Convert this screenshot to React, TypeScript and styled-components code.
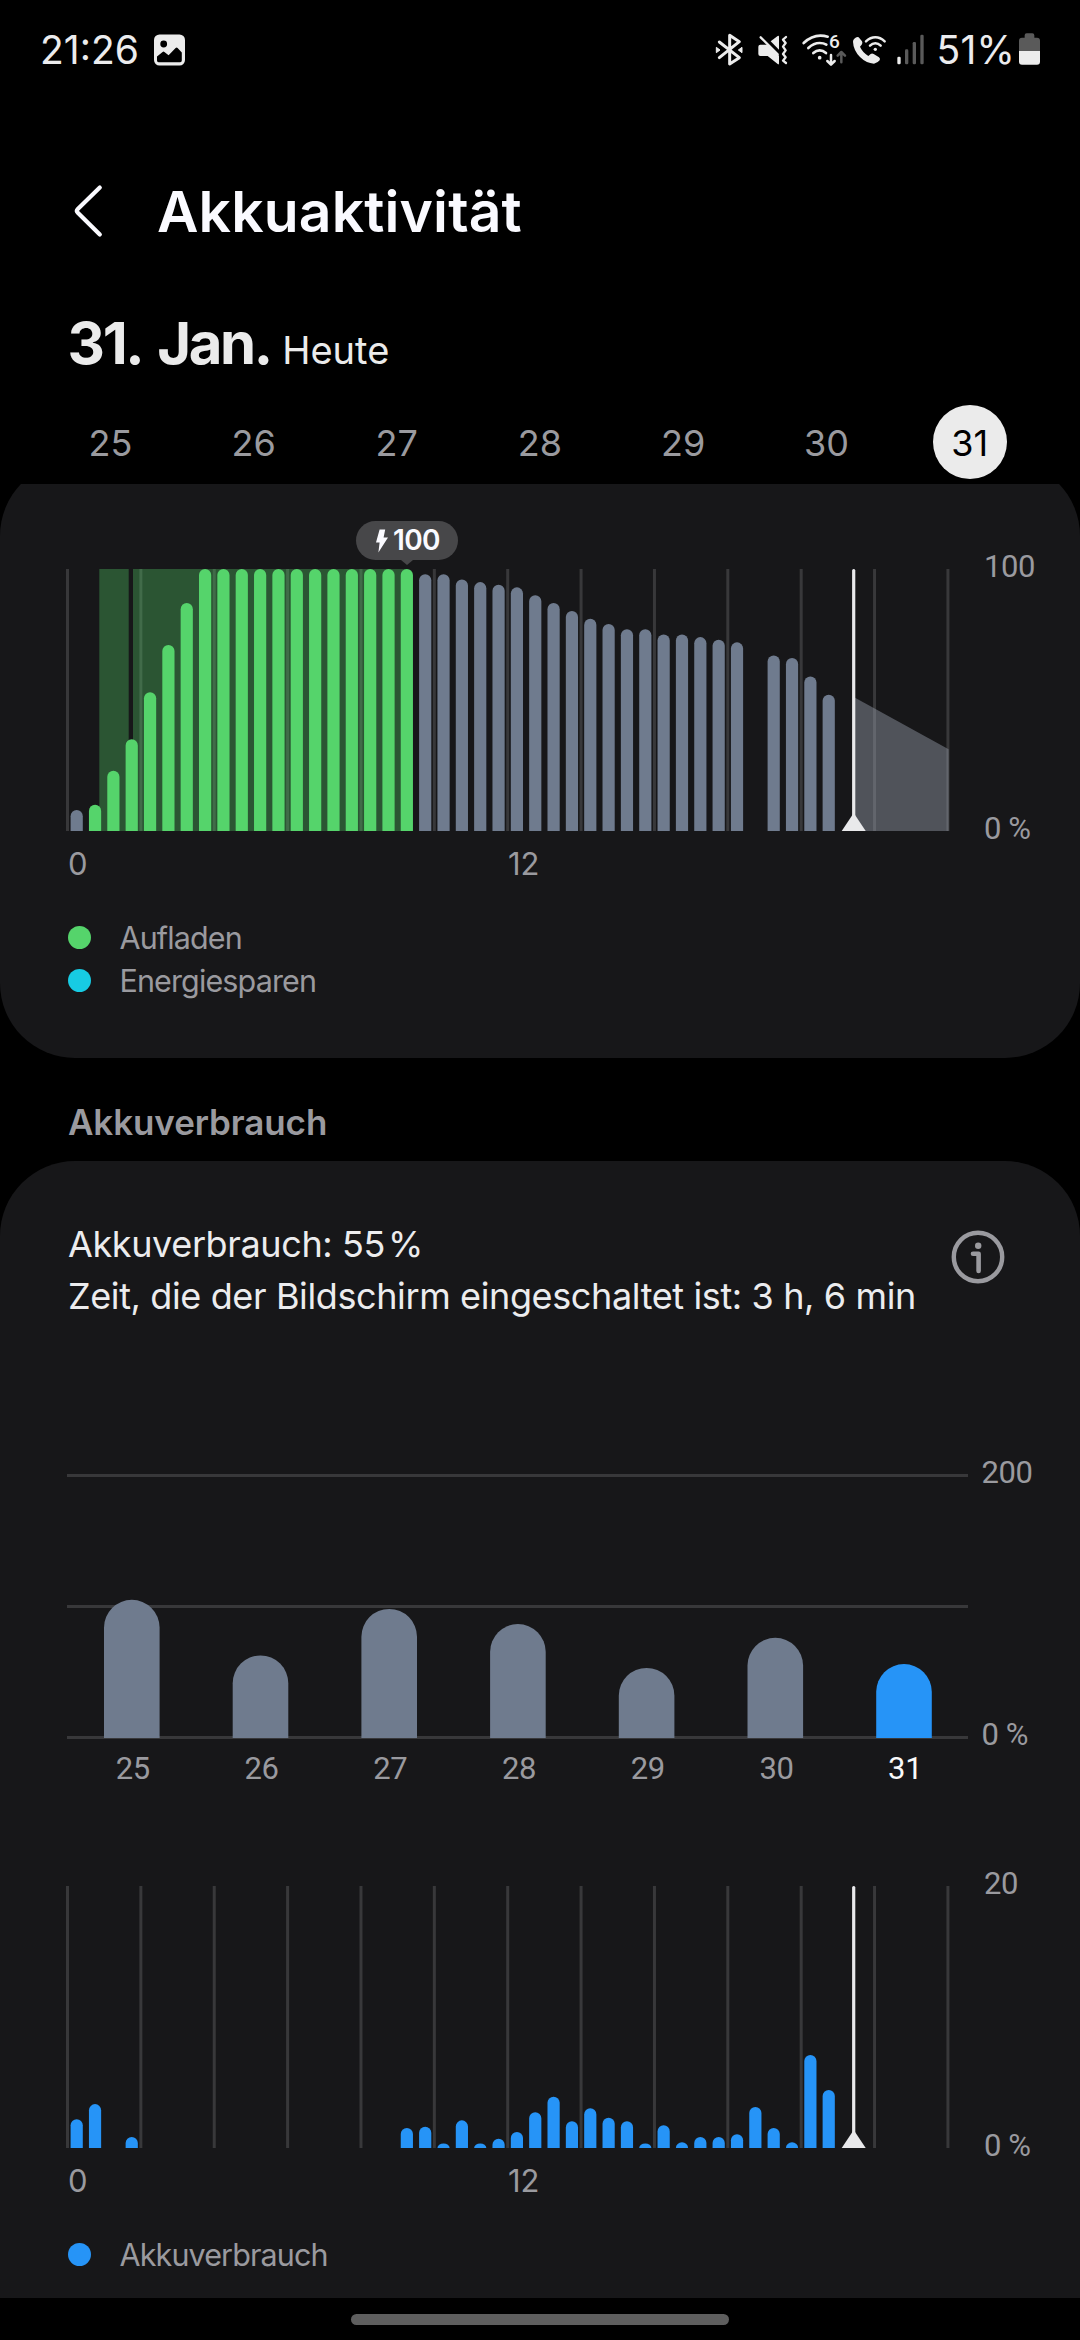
import React from 'react';
import styled, { createGlobalStyle } from 'styled-components';

const color = {
  page: '#000000',
  card: '#171719',
  grid: '#38383a',
  bright: '#ececee',
  white: '#fafaff',
  muted: '#9a9a9f',
  slate: '#6f7b8e',
  green: '#55d46b',
  cyan: '#17cbe3',
  blue: '#2694f7',
  pill: '#474749',
};

const GlobalStyle = createGlobalStyle`
  *, *::before, *::after { box-sizing: border-box; }
  html, body { margin: 0; padding: 0; background: ${color.page}; }
  body { font-family: Inter, Roboto, sans-serif; }
  svg { display: block; flex: none; overflow: visible; }
`;

const Screen = styled.div`
  display: flex;
  flex-direction: column;
  width: 1080px;
  height: 2340px;
  overflow: hidden;
  background: ${color.page};
`;

/* ---------- status bar ---------- */

const StatusBar = styled.header`
  display: flex;
  justify-content: space-between;
  align-items: flex-start;
  height: 96px;
  padding: 26px 39px 0 40px;
`;

const StatusGroup = styled.div`
  display: flex;
  align-items: center;
  height: 48px;
`;

const StatusText = styled.span<{ $tracking?: number }>`
  font-size: 39px;
  line-height: 48px;
  letter-spacing: ${(p) => p.$tracking ?? 0}px;
  color: ${color.bright};
`;

const IconSlot = styled.span<{ $before: number }>`
  display: flex;
  margin-left: ${(p) => p.$before}px;
`;

/* ---------- header ---------- */

const TitleBar = styled.div`
  display: flex;
  align-items: center;
  height: 72px;
  margin-top: 80px;
  padding-left: 74px;
  gap: 53px;
`;

const Title = styled.h1`
  margin: 0;
  font-size: 57px;
  font-weight: 600;
  line-height: 72px;
  letter-spacing: 0.13px;
  color: ${color.white};
`;

const DateRow = styled.div`
  display: flex;
  align-items: baseline;
  height: 70px;
  margin-top: 60px;
  padding-left: 67.6px;
  gap: 11.5px;
  color: #ebebeb;
`;

const DateText = styled.span`
  font-size: 58px;
  font-weight: 700;
  line-height: 70px;
  letter-spacing: -2.4px;
  word-spacing: 5.5px;
  white-space: nowrap;
`;

const TodayText = styled.span`
  font-size: 38px;
  line-height: 48px;
`;

const DayTabs = styled.nav`
  display: grid;
  grid-template-columns: repeat(7, 1fr);
  justify-items: center;
  height: 74px;
  margin-top: 27px;
  padding: 0 38.8px;
`;

const DayTab = styled.span<{ $active?: boolean }>`
  width: 74px;
  height: 74px;
  border-radius: 50%;
  font-size: 36px;
  line-height: 76px;
  text-align: center;
  color: ${(p) => (p.$active ? '#000' : color.muted)};
  background: ${(p) => (p.$active ? '#ebebeb' : 'transparent')};
`;

/* ---------- cards ---------- */

const ScrollArea = styled.main`
  display: flex;
  flex-direction: column;
  height: 1814px;
  margin-top: 5px;
  overflow: hidden;
`;

const LevelCard = styled.section`
  flex: none;
  height: 597px;
  margin-top: -23px;
  padding-top: 108px;
  border-radius: 75px;
  background: ${color.card};
`;

const UsageCard = styled.section`
  flex: none;
  height: 1137px;
  padding-top: 57px;
  border-radius: 75px 75px 0 0;
  background: ${color.card};
`;

const SectionTitle = styled.h2`
  flex: none;
  margin: 0;
  padding: 39px 0 14px 68px;
  font-size: 35px;
  font-weight: 600;
  line-height: 50px;
  letter-spacing: -0.1px;
  color: ${color.muted};
`;

const Summary = styled.div`
  display: flex;
  justify-content: space-between;
  align-items: flex-start;
  height: 104px;
  padding: 0 74px 0 68px;
`;

const SummaryText = styled.p`
  margin: 0;
  font-size: 36px;
  line-height: 52px;
  letter-spacing: -0.38px;
  white-space: nowrap;
  color: ${color.bright};
`;

const InfoButton = styled.span`
  display: flex;
  margin-top: 11px;
`;

/* ---------- charts ---------- */

const ChartRow = styled.div<{ $top?: number; $left?: number; $gap?: number }>`
  position: relative;
  display: flex;
  align-items: flex-start;
  margin-top: ${(p) => p.$top ?? 0}px;
  padding-left: ${(p) => p.$left ?? 66}px;
  gap: ${(p) => p.$gap ?? 34}px;
`;

const AxisColumn = styled.div<{ $bleed?: number }>`
  display: flex;
  flex-direction: column;
  justify-content: space-between;
  height: 302px;
  margin: -${(p) => p.$bleed ?? 22}px 0 -18px;
`;

const AxisLabel = styled.span<{ $active?: boolean }>`
  font-family: Roboto, sans-serif;
  font-size: 31px;
  line-height: 40px;
  letter-spacing: -0.4px;
  white-space: nowrap;
  text-align: center;
  color: ${(p) => (p.$active ? '#fafafa' : color.muted)};
  align-self: flex-start;
`;

const HourLabels = styled.div`
  display: grid;
  grid-template-columns: 440px 440px;
  margin-top: 13px;
  padding-left: 68px;
`;

const HourLabel = styled.span`
  font-size: 31px;
  line-height: 40px;
  color: ${color.muted};
`;

const WeekLabels = styled.div`
  display: grid;
  grid-template-columns: repeat(7, 1fr);
  justify-items: center;
  width: 901px;
  margin: 10px 0 0 68.5px;
`;

const Tooltip = styled.div`
  position: absolute;
  left: 356px;
  top: -48px;
  display: flex;
  align-items: center;
  gap: 5px;
  width: 102px;
  height: 39px;
  padding-left: 20px;
  border-radius: 20px;
  background: ${color.pill};
  color: ${color.white};
  font-size: 28px;
  font-weight: 600;
  line-height: 39px;
  letter-spacing: -0.6px;

  &::after {
    content: '';
    position: absolute;
    left: 45px;
    top: 39px;
    border: 6px solid transparent;
    border-top: 5px solid ${color.pill};
    border-bottom: 0;
  }
`;

const Legend = styled.ul`
  margin: 32px 0 0;
  padding: 0 0 0 68px;
  list-style: none;
`;

const LegendItem = styled.li`
  display: flex;
  align-items: center;
  gap: 28.5px;
  height: 43px;
  font-size: 30.5px;
  line-height: 43px;
  letter-spacing: -0.88px;
  color: ${color.muted};
`;

const LegendDot = styled.span<{ $color: string }>`
  width: 23px;
  height: 23px;
  border-radius: 50%;
  background: ${(p) => p.$color};
`;

const NavArea = styled.footer`
  display: flex;
  justify-content: center;
  height: 42px;
  padding-top: 16px;
`;

const HomeHandle = styled.span`
  width: 378px;
  height: 11px;
  border-radius: 6px;
  background: #5e5e5e;
`;

/* ---------- data ---------- */

const days = ['25', '26', '27', '28', '29', '30', '31'];

const levels: (number | null)[] = [
  8, 10, 23, 35, 53, 71, 87, 100, 100, 100, 100, 100, 100, 100, 100, 100, 100, 100, 100, 98, 98, 96,
  95, 94, 93, 90, 87, 84, 81, 79, 77, 77, 75, 75, 74, 73, 72, null, 67, 66, 59, 52,
];

const usage: (number | null)[] = [
  2.2, 3.35, null, 0.84, null, null, null, null, null, null, null, null, null, null, null, null,
  null, null, 1.53, 1.63, 0.34, 2.11, 0.34, 0.71, 1.22, 2.73, 3.92, 2.04, 3.03, 2.31, 2.04, 0.34,
  1.73, 0.44, 0.84, 0.84, 1.05, 3.13, 1.53, 0.44, 7.1, 4.43,
];

const week = [105.5, 63, 98.5, 87, 53.5, 76.5, 56.5];

const PLOT_W = 884;
const PLOT_H = 262;
const SLOT = 18.342;
const NOW_X = 787.7;

const barPath = (x: number, w: number, h: number, base: number) => {
  const rx = w / 2;
  const ry = Math.min(rx, h);
  return `M${x} ${base}V${base - h + ry}a${rx} ${ry} 0 0 1 ${w} 0V${base}Z`;
};

const HourGrid = () => (
  <g fill={color.grid}>
    {Array.from({ length: 13 }, (_, i) => (
      <rect key={i} x={i * SLOT * 4} y="0" width="3" height={PLOT_H} />
    ))}
  </g>
);

const HourBars = ({
  values,
  max,
  fill,
}: {
  values: (number | null)[];
  max: number;
  fill: (i: number) => string;
}) => (
  <g>
    {values.map((v, i) =>
      v === null ? null : (
        <path key={i} d={barPath(4.6 + i * SLOT, 12.2, (v / max) * PLOT_H, PLOT_H)} fill={fill(i)} />
      ),
    )}
  </g>
);

const NowMarker = () => (
  <g fill="#e9e9eb">
    <rect x={NOW_X - 1.6} y="0" width="3.2" height={PLOT_H} rx="1.5" />
    <path d={`M${NOW_X} 244L${NOW_X + 12} 262H${NOW_X - 12}Z`} />
  </g>
);

const LevelPlot = () => (
  <svg width={PLOT_W} height={PLOT_H} viewBox={`0 0 ${PLOT_W} ${PLOT_H}`}>
    <HourGrid />
    <g fill={color.green} fillOpacity="0.33">
      <rect x="33.3" y="0" width="29.4" height={PLOT_H} />
      <rect x="67" y="0" width="273.7" height={PLOT_H} />
    </g>
    <path d={`M${NOW_X} 128L882.6 180.3V262H${NOW_X}Z`} fill="#979dab" fillOpacity="0.45" />
    <HourBars
      values={levels}
      max={100}
      fill={(i) => (i >= 1 && i <= 18 ? color.green : color.slate)}
    />
    <NowMarker />
  </svg>
);

const WeekPlot = () => (
  <svg width="901" height="265" viewBox="0 0 901 265">
    <g fill={color.grid}>
      <rect y="0" width="901" height="3" />
      <rect y="131" width="901" height="3" />
      <rect y="262" width="901" height="3" />
    </g>
    {week.map((v, i) => (
      <path
        key={i}
        d={barPath(37 + i * 128.7, 55.6, v * 1.31, 264)}
        fill={i === 6 ? color.blue : color.slate}
      />
    ))}
  </svg>
);

const UsagePlot = () => (
  <svg width={PLOT_W} height={PLOT_H} viewBox={`0 0 ${PLOT_W} ${PLOT_H}`}>
    <HourGrid />
    <HourBars values={usage} max={20} fill={() => color.blue} />
    <NowMarker />
  </svg>
);

/* ---------- icons ---------- */

const BRIGHT = '#ececec';
const DIM = '#5a5a5a';

const PictureIcon = () => (
  <svg width="31" height="32" viewBox="0 0 31 32">
    <path
      fillRule="evenodd"
      fill={BRIGHT}
      d="M5.5 0.5H25.5A5.5 5.5 0 0 1 31 6V26A5.5 5.5 0 0 1 25.5 31.5H5.5A5.5 5.5 0 0 1 0 26V6A5.5 5.5 0 0 1 5.5 0.5ZM9.7 6.6A3.4 3.4 0 1 0 9.7 13.4A3.4 3.4 0 1 0 9.7 6.6ZM3 22.5V26.6Q3 28.2 4.6 28.2H26.2Q27.8 28.2 27.8 26.6V18.4L23.6 14Q22.6 13 21.6 14L14.6 21.2L10.4 17.9Q9.5 17.2 8.6 17.9Z"
    />
  </svg>
);

const BluetoothIcon = () => (
  <svg width="29" height="36" viewBox="102 96 87 108">
    <g fill="none" stroke={BRIGHT} strokeWidth="9" strokeLinecap="round" strokeLinejoin="round">
      <path d="M115 126L175 173L146 192V106L175 125L115 173" />
    </g>
    <path
      d="M106 142L117 150L106 158Z M183 142L172 150L183 158Z"
      fill={BRIGHT}
      stroke={BRIGHT}
      strokeWidth="3"
      strokeLinejoin="round"
    />
  </svg>
);

const MuteVibrateIcon = () => (
  <svg width="32" height="36" viewBox="228 96 96 108">
    <path
      d="M238 134H256L262 135L294 167V190Q294 195 290 192L260 168H238Q232 168 232 162V140Q232 134 238 134Z"
      fill={BRIGHT}
    />
    <path d="M269 124L290 108Q294 105 294 110V149Z" fill={BRIGHT} />
    <path d="M239 112L290 163" stroke={BRIGHT} strokeWidth="7" strokeLinecap="round" />
    <path
      d="M315 111L306 119L314 129L306 140L314 151L306 162L314 172L306 182L315 189"
      fill="none"
      stroke={BRIGHT}
      strokeWidth="7"
      strokeLinecap="round"
      strokeLinejoin="round"
    />
  </svg>
);

const SixLabel = styled.text`
  font: 500 57px Roboto, sans-serif;
  fill: ${BRIGHT};
`;

const WifiIcon = () => (
  <svg width="46" height="36" viewBox="360 96 138 108">
    <g fill="none" stroke={BRIGHT} strokeWidth="8" strokeLinecap="round">
      <path d="M368 129Q392 107 418 107Q430 107 440 110" />
      <path d="M382 144Q398 129 416 129Q428 129 436 134" />
      <path d="M397 159Q406 151 416 151Q426 151 435 159" />
    </g>
    <circle cx="416" cy="173" r="5.5" fill={BRIGHT} />
    <SixLabel x="444" y="145">
      6
    </SixLabel>
    <g fill="none" strokeWidth="7.5" strokeLinecap="round" strokeLinejoin="round">
      <path d="M450 165V192M439 183L450 194L461 183" stroke={BRIGHT} />
      <path d="M481 187V158M470 167L481 156L492 167" stroke={DIM} />
    </g>
  </svg>
);

const WifiCallIcon = () => (
  <svg width="35" height="36" viewBox="513 96 105 108">
    <path
      d="M520 116Q527 109 533 112L543 124Q546 129 542 134L537 140Q543 155 562 168L569 162Q573 159 578 162L594 172Q599 176 596 181Q590 189 579 191Q556 190 537 171Q517 150 516 125Q516 119 520 116Z"
      fill={BRIGHT}
    />
    <g fill="none" stroke={BRIGHT} strokeWidth="7.5" strokeLinecap="round">
      <path d="M555 124Q568 112 583 112Q598 112 611 124" />
      <path d="M567 137Q574 130 583 130Q592 130 599 137" />
    </g>
    <circle cx="583" cy="148" r="5" fill={BRIGHT} />
  </svg>
);

const SignalIcon = () => (
  <svg width="29" height="36" viewBox="645 96 87 108">
    <rect x="649" y="170" width="10" height="23" rx="4" fill={BRIGHT} />
    <g fill={DIM}>
      <rect x="672" y="148" width="10" height="45" rx="4" />
      <rect x="695" y="126" width="10" height="67" rx="4" />
      <rect x="718" y="104" width="10" height="89" rx="4" />
    </g>
  </svg>
);

const BatteryIcon = () => (
  <svg width="23" height="36" viewBox="1014 96 69 108">
    <path
      d="M1017 153V122Q1017 113 1026 113H1034V106Q1034 100 1040 100H1057Q1063 100 1063 106V113H1071Q1080 113 1080 122V153Z"
      fill={DIM}
    />
    <path d="M1017 153H1080V185Q1080 194 1071 194H1026Q1017 194 1017 185Z" fill={BRIGHT} />
  </svg>
);

const BackIcon = () => (
  <svg width="30" height="54" viewBox="74 185 30 54">
    <path
      d="M99.8 187.6L77.8 208.9Q75.9 210.8 77.8 212.7L99.8 234.6"
      fill="none"
      stroke={color.white}
      strokeWidth="4.2"
      strokeLinecap="round"
      strokeLinejoin="round"
    />
  </svg>
);

const InfoIcon = () => (
  <svg width="56" height="56" viewBox="0 0 56 56">
    <g fill="none" stroke={color.muted} strokeLinecap="round" strokeLinejoin="round">
      <circle cx="28" cy="28" r="24.2" strokeWidth="4.4" />
      <path d="M23 24.8H28.6V42" strokeWidth="4.6" />
    </g>
    <circle cx="28.2" cy="16.8" r="3.2" fill={color.muted} />
  </svg>
);

const BoltIcon = () => (
  <svg width="12" height="24" viewBox="0 0 12 24">
    <path d="M3.6 0.5H9.2L7.6 8.6H12L2.4 23.4L3.6 13.4H0Z" fill={color.white} />
  </svg>
);

/* ---------- page ---------- */

export default function App() {
  return (
    <>
      <GlobalStyle />
      <Screen>
        <StatusBar>
          <StatusGroup>
            <StatusText>21:26</StatusText>
            <IconSlot $before={15}>
              <PictureIcon />
            </IconSlot>
          </StatusGroup>
          <StatusGroup>
            <IconSlot $before={0}>
              <BluetoothIcon />
            </IconSlot>
            <IconSlot $before={13}>
              <MuteVibrateIcon />
            </IconSlot>
            <IconSlot $before={12}>
              <WifiIcon />
            </IconSlot>
            <IconSlot $before={5}>
              <WifiCallIcon />
            </IconSlot>
            <IconSlot $before={9}>
              <SignalIcon />
            </IconSlot>
            <IconSlot $before={12}>
              <StatusText $tracking={0.2}>51%</StatusText>
            </IconSlot>
            <IconSlot $before={3}>
              <BatteryIcon />
            </IconSlot>
          </StatusGroup>
        </StatusBar>

        <TitleBar>
          <BackIcon />
          <Title>Akkuaktivität</Title>
        </TitleBar>

        <DateRow>
          <DateText>31. Jan.</DateText>
          <TodayText>Heute</TodayText>
        </DateRow>

        <DayTabs>
          {days.map((d) => (
            <DayTab key={d} $active={d === '31'}>
              {d}
            </DayTab>
          ))}
        </DayTabs>

        <ScrollArea>
          <LevelCard>
            <ChartRow>
              <LevelPlot />
              <AxisColumn>
                <AxisLabel>100</AxisLabel>
                <AxisLabel>0 %</AxisLabel>
              </AxisColumn>
              <Tooltip>
                <BoltIcon />
                100
              </Tooltip>
            </ChartRow>
            <HourLabels>
              <HourLabel>0</HourLabel>
              <HourLabel>12</HourLabel>
            </HourLabels>
            <Legend>
              <LegendItem>
                <LegendDot $color={color.green} />
                Aufladen
              </LegendItem>
              <LegendItem>
                <LegendDot $color={color.cyan} />
                Energiesparen
              </LegendItem>
            </Legend>
          </LevelCard>

          <SectionTitle>Akkuverbrauch</SectionTitle>

          <UsageCard>
            <Summary>
              <div>
                <SummaryText>Akkuverbrauch: 55{'\u200a'}%</SummaryText>
                <SummaryText>Zeit, die der Bildschirm eingeschaltet ist: 3 h, 6 min</SummaryText>
              </div>
              <InfoButton>
                <InfoIcon />
              </InfoButton>
            </Summary>

            <ChartRow $top={152} $left={67} $gap={13.5}>
              <WeekPlot />
              <AxisColumn $bleed={21}>
                <AxisLabel>200</AxisLabel>
                <AxisLabel>0 %</AxisLabel>
              </AxisColumn>
            </ChartRow>
            <WeekLabels>
              {days.map((d) => (
                <AxisLabel key={d} $active={d === '31'}>
                  {d}
                </AxisLabel>
              ))}
            </WeekLabels>

            <ChartRow $top={97}>
              <UsagePlot />
              <AxisColumn>
                <AxisLabel>20</AxisLabel>
                <AxisLabel>0 %</AxisLabel>
              </AxisColumn>
            </ChartRow>
            <HourLabels>
              <HourLabel>0</HourLabel>
              <HourLabel>12</HourLabel>
            </HourLabels>
            <Legend>
              <LegendItem>
                <LegendDot $color={color.blue} />
                Akkuverbrauch
              </LegendItem>
            </Legend>
          </UsageCard>
        </ScrollArea>

        <NavArea>
          <HomeHandle />
        </NavArea>
      </Screen>
    </>
  );
}
